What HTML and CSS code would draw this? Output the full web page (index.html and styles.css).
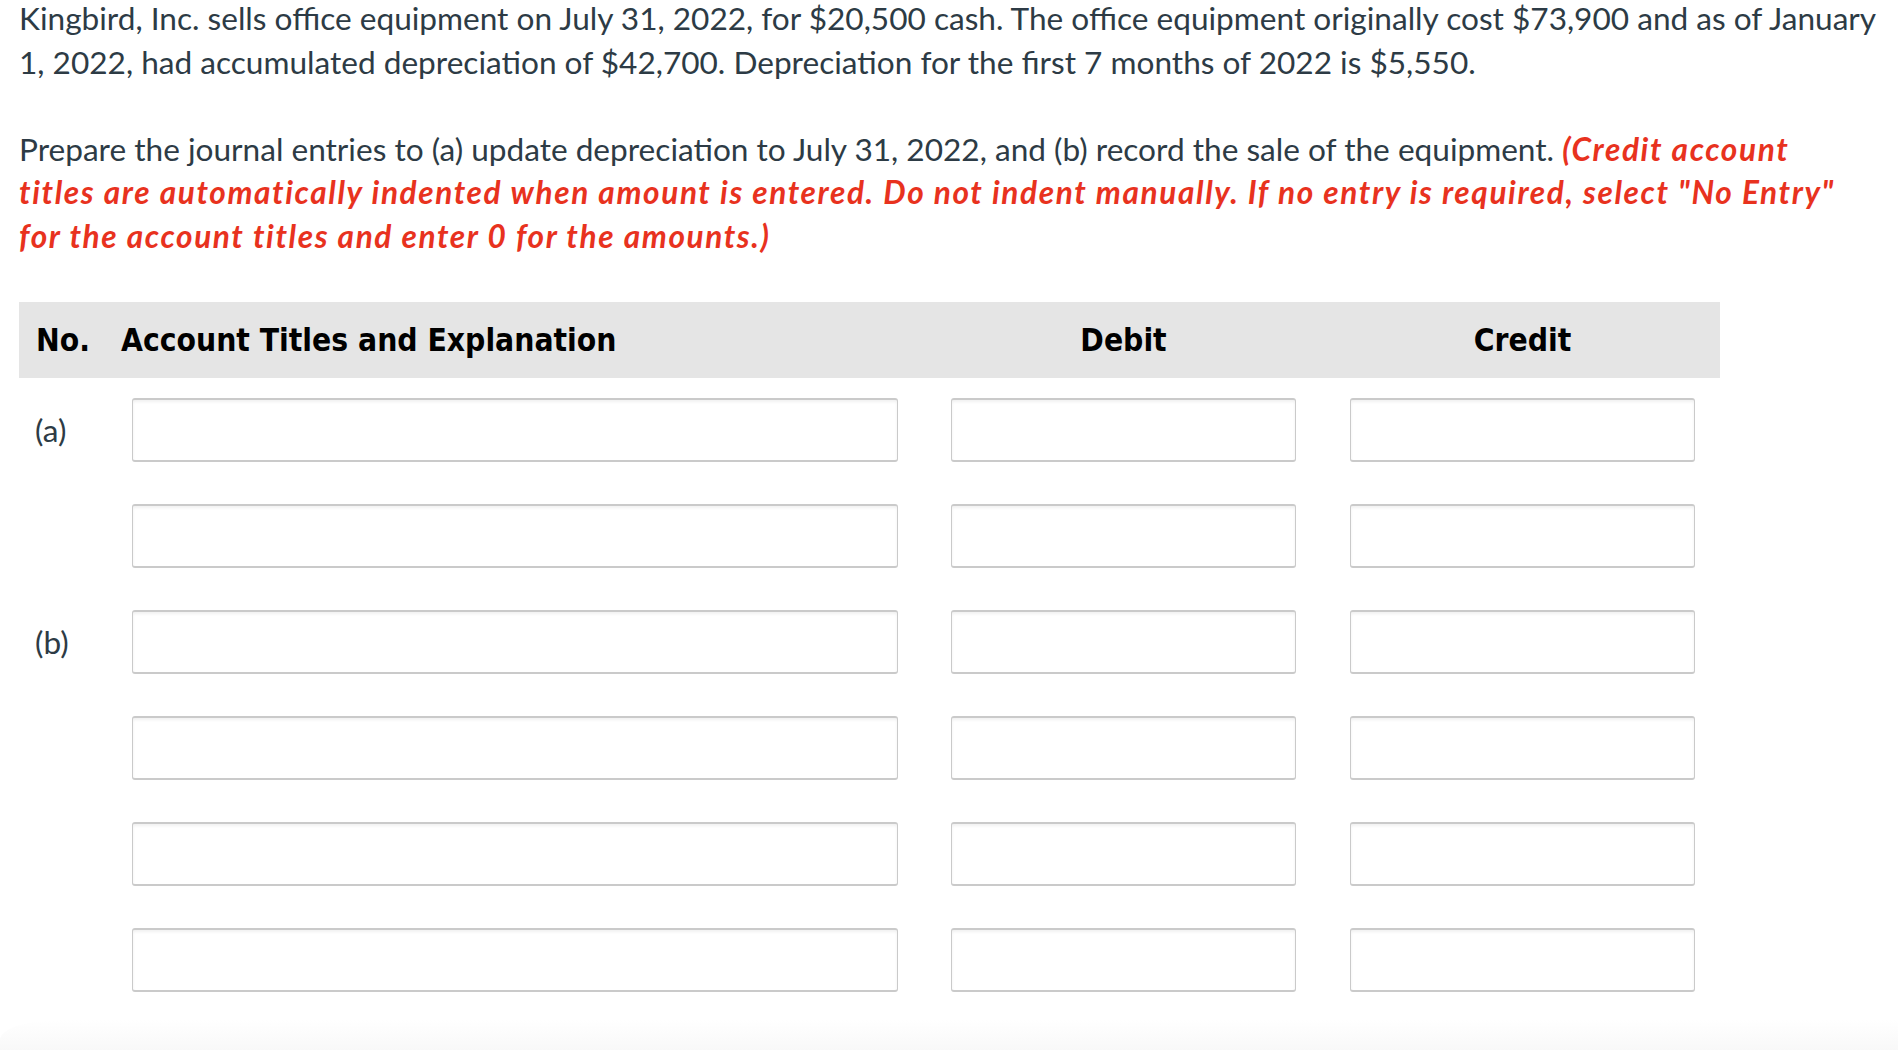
FILE: index.html
```html
<!DOCTYPE html>
<html lang="en">
<head>
<meta charset="utf-8">
<title>Journal entries</title>
<link rel="stylesheet" href="styles.css">
</head>
<body>
<div class="page">
  <p class="intro">Kingbird, Inc. sells office equipment on July 31, 2022, for $20,500 cash. The office equipment originally cost $73,900 and as of January 1, 2022, had accumulated depreciation of $42,700. Depreciation for the first 7 months of 2022 is $5,550.</p>
  <p class="intro">Prepare the journal entries to (a) update depreciation to July 31, 2022, and (b) record the sale of the equipment. <em class="note">(Credit account<br>titles are automatically indented when amount is entered. Do not indent manually. If no entry is required, select "No Entry" for the account titles and enter 0 for the amounts.)</em></p>

  <div class="journal">
    <div class="head">
      <div class="h-no">No.</div>
      <div class="h-acct">Account Titles and Explanation</div>
      <div class="h-amt h-debit">Debit</div>
      <div class="h-amt h-credit">Credit</div>
    </div>
    <div class="rows">
      <div class="lbl">(a)</div><div class="box acct"></div><div class="box debit"></div><div class="box credit"></div>
      <div class="lbl"></div><div class="box acct"></div><div class="box debit"></div><div class="box credit"></div>
      <div class="lbl">(b)</div><div class="box acct"></div><div class="box debit"></div><div class="box credit"></div>
      <div class="lbl"></div><div class="box acct"></div><div class="box debit"></div><div class="box credit"></div>
      <div class="lbl"></div><div class="box acct"></div><div class="box debit"></div><div class="box credit"></div>
      <div class="lbl"></div><div class="box acct"></div><div class="box debit"></div><div class="box credit"></div>
    </div>
  </div>
  <div class="shade"></div>
</div>
</body>
</html>
```

FILE: styles.css
```css
html, body {
  margin: 0;
  padding: 0;
  background: #ffffff;
}
.page {
  padding: 0 18px 0 19px;
  font-family: Lato, "Open Sans", sans-serif;
  color: #2d3b45;
}
.intro {
  margin: 0 0 43.6px 0;
  font-size: 31.6px;
  line-height: 43.6px;
}
.intro:first-child {
  margin-top: -3px;
}
.note {
  color: #e8321e;
  font-weight: 700;
  font-style: italic;
  letter-spacing: 1.6px;
}
.journal {
  width: 1701px;
}
.head {
  display: grid;
  grid-template-columns: 102px 777px 53px 345px 54px 345px 25px;
  align-items: center;
  height: 76px;
  background: #e5e5e5;
  font-family: "DejaVu Sans Condensed", "DejaVu Sans", Tahoma, sans-serif;
  font-stretch: condensed;
  font-weight: 700;
  font-size: 31.5px;
  color: #000;
}
.h-no {
  padding-left: 17px;
}
.h-amt {
  text-align: center;
}
.h-debit { grid-column: 4; }
.h-credit { grid-column: 6; }
.rows {
  display: grid;
  grid-template-columns: 113px 766px 53px 345px 54px 345px;
  grid-auto-rows: 64px;
  row-gap: 42px;
  padding-top: 20px;
  align-items: center;
}
.lbl {
  grid-column: 1;
  padding-left: 16px;
  font-size: 31.6px;
  color: #2d3b45;
}
.acct { grid-column: 2; }
.debit { grid-column: 4; }
.credit { grid-column: 6; }
.box {
  box-sizing: border-box;
  height: 64px;
  background: #fff;
  border: 1px solid #cacaca;
  border-top-width: 2px;
  border-bottom-width: 2px;
  border-radius: 3px;
  box-shadow: inset 0 2px 3px rgba(0, 0, 0, 0.06);
}
.shade {
  margin: 28px -18px 0 -19px;
  height: 40px;
  border-top-left-radius: 60px 20px;
  background: linear-gradient(#ffffff, #f6f6f6);
}
```
